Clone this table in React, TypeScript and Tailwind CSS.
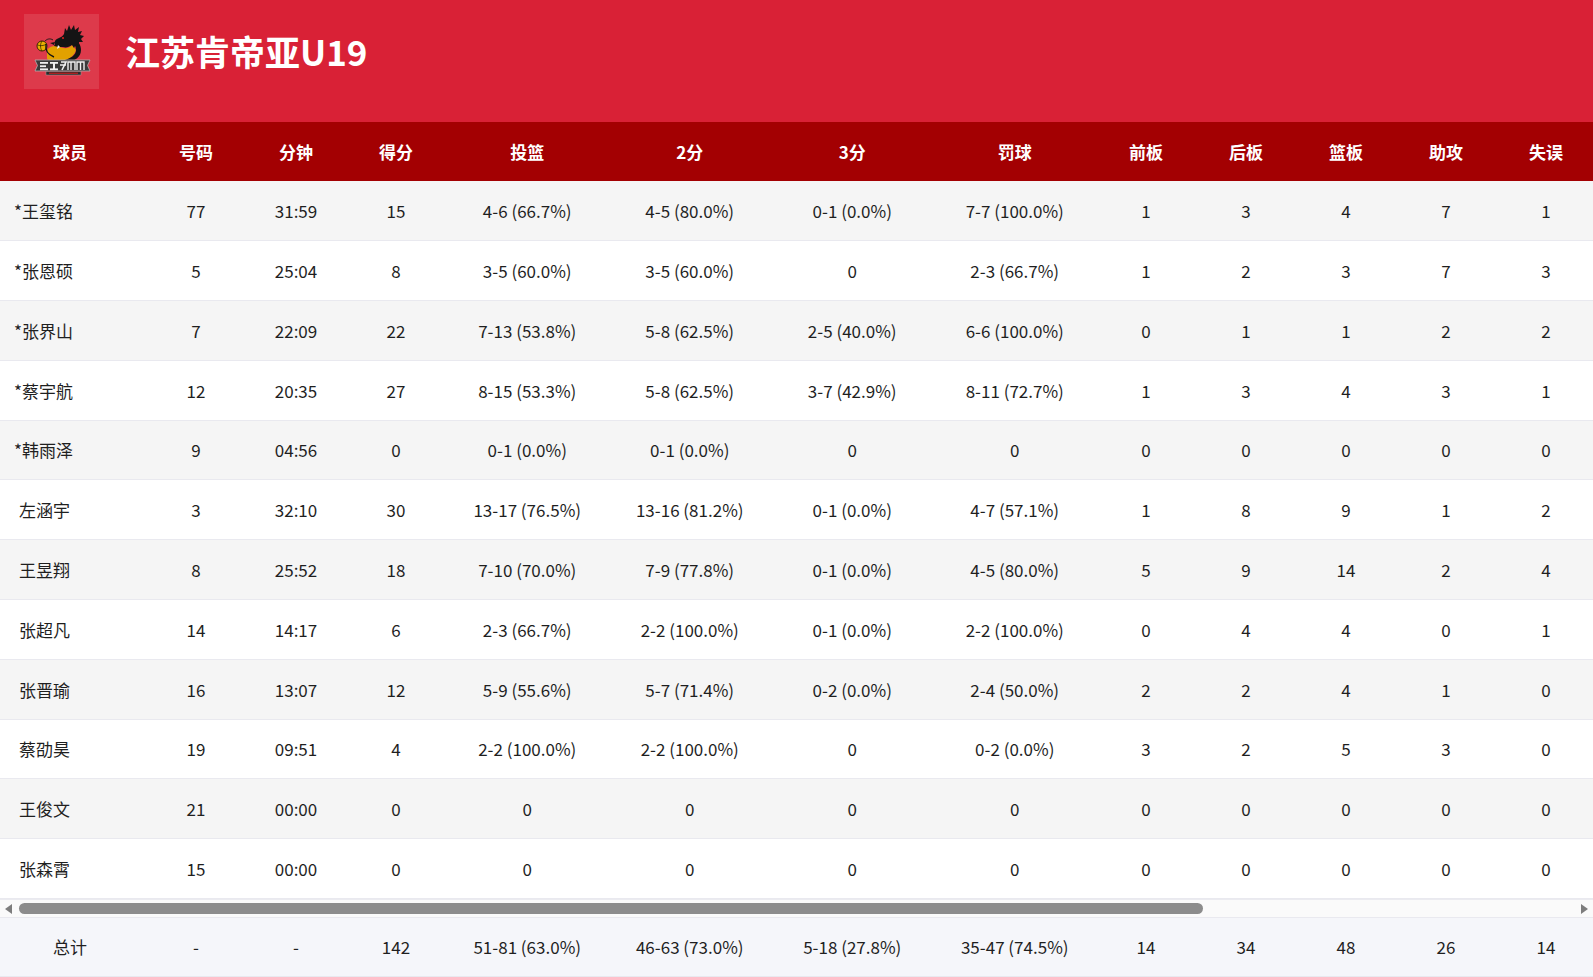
import React from 'react';

type Row = {
    name: string;
    starter: boolean;
    cells: string[];
};

const rows: Row[] = [
    { name: '王玺铭', starter: true, cells: ['77', '31:59', '15', '4-6 (66.7%)', '4-5 (80.0%)', '0-1 (0.0%)', '7-7 (100.0%)', '1', '3', '4', '7', '1'] },
    { name: '张恩硕', starter: true, cells: ['5', '25:04', '8', '3-5 (60.0%)', '3-5 (60.0%)', '0', '2-3 (66.7%)', '1', '2', '3', '7', '3'] },
    { name: '张界山', starter: true, cells: ['7', '22:09', '22', '7-13 (53.8%)', '5-8 (62.5%)', '2-5 (40.0%)', '6-6 (100.0%)', '0', '1', '1', '2', '2'] },
    { name: '蔡宇航', starter: true, cells: ['12', '20:35', '27', '8-15 (53.3%)', '5-8 (62.5%)', '3-7 (42.9%)', '8-11 (72.7%)', '1', '3', '4', '3', '1'] },
    { name: '韩雨泽', starter: true, cells: ['9', '04:56', '0', '0-1 (0.0%)', '0-1 (0.0%)', '0', '0', '0', '0', '0', '0', '0'] },
    { name: '左涵宇', starter: false, cells: ['3', '32:10', '30', '13-17 (76.5%)', '13-16 (81.2%)', '0-1 (0.0%)', '4-7 (57.1%)', '1', '8', '9', '1', '2'] },
    { name: '王昱翔', starter: false, cells: ['8', '25:52', '18', '7-10 (70.0%)', '7-9 (77.8%)', '0-1 (0.0%)', '4-5 (80.0%)', '5', '9', '14', '2', '4'] },
    { name: '张超凡', starter: false, cells: ['14', '14:17', '6', '2-3 (66.7%)', '2-2 (100.0%)', '0-1 (0.0%)', '2-2 (100.0%)', '0', '4', '4', '0', '1'] },
    { name: '张晋瑜', starter: false, cells: ['16', '13:07', '12', '5-9 (55.6%)', '5-7 (71.4%)', '0-2 (0.0%)', '2-4 (50.0%)', '2', '2', '4', '1', '0'] },
    { name: '蔡劭昊', starter: false, cells: ['19', '09:51', '4', '2-2 (100.0%)', '2-2 (100.0%)', '0', '0-2 (0.0%)', '3', '2', '5', '3', '0'] },
    { name: '王俊文', starter: false, cells: ['21', '00:00', '0', '0', '0', '0', '0', '0', '0', '0', '0', '0'] },
    { name: '张森霄', starter: false, cells: ['15', '00:00', '0', '0', '0', '0', '0', '0', '0', '0', '0', '0'] },
];

const totals = ['-', '-', '142', '51-81 (63.0%)', '46-63 (73.0%)', '5-18 (27.8%)', '35-47 (74.5%)', '14', '34', '48', '26', '14'];

const headers = ['号码', '分钟', '得分', '投篮', '2分', '3分', '罚球', '前板', '后板', '篮板', '助攻', '失误'];

// wide columns: 投篮, 2分, 3分, 罚球
const colWidths = [100, 100, 100, 162.5, 162.5, 162.5, 162.5, 100, 100, 100, 100, 100];

const Cols = () => (
    <colgroup>
        <col style={{ width: 146 }} />
        {colWidths.map((w, i) => (
            <col key={i} style={{ width: w }} />
        ))}
    </colgroup>
);

const TeamLogo = () => (
    <svg viewBox="0 0 75 75" className="h-[75px] w-[75px]">
        {/* yellow belly */}
        <path d="M23 36c3-4 8-5 13-3 4 2 9 2 12-2l4 5c-2 6-7 10-15 11-6 1-11 0-14-2z" fill="#e2a100" />
        {/* basketball */}
        <circle cx="18" cy="32" r="5" fill="#e9b000" stroke="#2a1f00" strokeWidth="0.9" />
        <path d="M13.5 31c3 1 6 1 9-1M18 27c-2 3-2 7 0 10" fill="none" stroke="#2a1f00" strokeWidth="0.7" />
        {/* dragon body band */}
        <path d="M48 24c6 2 9 7 9 12 0 7-6 11-13 12l-3-2c6-2 11-5 11-10 0-4-2-7-6-9z" fill="#141414" />
        <path d="M22 30c-1 6 2 11 8 13" fill="none" stroke="#141414" strokeWidth="1.4" />
        {/* head and mane */}
        <path d="M31 30c-1-3 1-5 4-6 2-1 4-2 5-4l1-6 2 3 2-6 2 5 3-5 1 5 4-3-1 5 4-1-2 4 4 1-3 3 2 3-4 0v4l-3-2-2 4-2-3c-3 2-6 3-9 2-3 0-6 0-9-1z" fill="#141414" />
        <path d="M31 28l-5 1 4 2z" fill="#141414" />
        <circle cx="39" cy="24" r="1.1" fill="#d62020" />
        <path d="M34 31l-1 4 3-2z" fill="#f2f2f2" />
        <path d="M29 26c-3-2-6-1-8 1" fill="none" stroke="#141414" strokeWidth="0.9" />
        {/* banner */}
        <path d="M11 46h55l-2.5 5.5 2.5 5.5H11l2.5-5.5z" fill="#3a3a3a" stroke="#b0b0b0" strokeWidth="0.8" />
        <rect x="16" y="48" width="8" height="1.8" fill="#f0f0f0" />
        <rect x="16" y="51.3" width="6" height="1.8" fill="#f0f0f0" />
        <rect x="16" y="54.4" width="8" height="1.8" fill="#f0f0f0" />
        <rect x="26" y="48" width="8" height="1.8" fill="#f0f0f0" />
        <rect x="29" y="48" width="2" height="8" fill="#f0f0f0" />
        <rect x="26" y="54.4" width="8" height="1.8" fill="#f0f0f0" />
        <path d="M37 48h5l-4 8M36 51h6" fill="none" stroke="#f0f0f0" strokeWidth="1.6" />
        <path d="M44 56v-8h7v8M47 48v8" fill="none" stroke="#f0f0f0" strokeWidth="1.4" />
        <path d="M53 56v-8h7v8M56.5 48v8" fill="none" stroke="#f0f0f0" strokeWidth="1.4" />
        <rect x="22" y="57.5" width="35" height="3.5" fill="#2a2a2a" stroke="#a0a0a0" strokeWidth="0.5" />
        <rect x="25" y="58.6" width="29" height="1.3" fill="#b52020" />
    </svg>
);

const ScrollBar = () => (
    <div className="flex h-[18px] items-center border-t border-[#ebebf0] bg-[#fafafa]">
        <div className="flex w-[17px] justify-center">
            <div className="h-0 w-0 border-y-[5px] border-r-[7px] border-y-transparent border-r-[#7d7d7d]" />
        </div>
        <div className="flex-1">
            <div className="ml-[2px] h-[11px] w-[1184px] rounded-full bg-[#8c8c8c]" />
        </div>
        <div className="flex w-[17px] justify-center">
            <div className="h-0 w-0 border-y-[5px] border-l-[7px] border-y-transparent border-l-[#7d7d7d]" />
        </div>
    </div>
);

export default function App() {
    const font = { fontFamily: '"Noto Sans CJK SC", "Noto Sans", sans-serif' };
    const cell = 'text-center whitespace-nowrap';

    return (
        <div className="min-h-screen bg-white text-[#1f1f1f]" style={font}>
            <header className="flex h-[122px] items-start bg-[#d92136] px-[24px] pt-[14px]">
                <div className="flex h-[75px] w-[75px] items-center justify-center bg-[#dd3a4b]">
                    <TeamLogo />
                </div>
                <h1 className="ml-[26px] mt-[17px] text-[35px] font-bold leading-[40px] text-white">江苏肯帝亚U19</h1>
            </header>

            <div className="overflow-hidden">
                <table className="w-[1596px] table-fixed border-collapse text-[17px]">
                    <Cols />
                    <thead>
                        <tr className="h-[59px] bg-[#a30002] text-white">
                            <th className="pr-[6px] text-center font-bold">球员</th>
                            {headers.map((h) => (
                                <th key={h} className="text-center font-bold">{h}</th>
                            ))}
                        </tr>
                    </thead>
                    <tbody>
                        {rows.map((r, i) => {
                            const bg = i % 2 === 0 ? 'bg-[#f5f5f5]' : 'bg-white';
                            return (
                                <tr key={r.name} className={`h-[59.8px] border-b border-[#e9e9ef] ${bg}`}>
                                    <td className={`whitespace-nowrap text-left ${r.starter ? 'pl-[14px]' : 'pl-[19px]'}`}>
                                        {r.starter ? '*' : ''}{r.name}
                                    </td>
                                    {r.cells.map((c, j) => (
                                        <td key={j} className={cell}>{c}</td>
                                    ))}
                                </tr>
                            );
                        })}
                    </tbody>
                </table>
            </div>

            <ScrollBar />

            <div className="overflow-hidden">
                <table className="w-[1596px] table-fixed border-collapse text-[17px]">
                    <Cols />
                    <tbody>
                        <tr className="h-[59px] border-y border-[#e9e9ef] bg-[#f5f6fa]">
                            <td className="pr-[6px] text-center">总计</td>
                            {totals.map((c, j) => (
                                <td key={j} className={cell}>{c}</td>
                            ))}
                        </tr>
                    </tbody>
                </table>
            </div>
        </div>
    );
}
